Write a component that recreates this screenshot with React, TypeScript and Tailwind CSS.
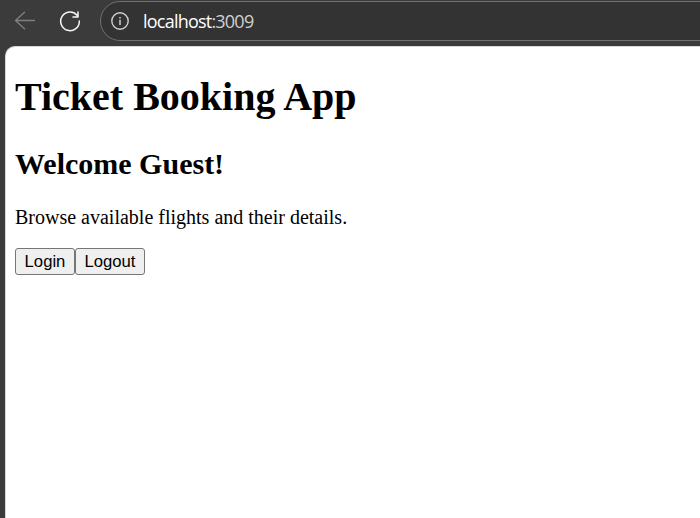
export default function App() {
  return (
    <div className="flex h-[518px] w-[700px] flex-col overflow-hidden bg-[#3b3b3b]">
      <header className="flex h-[46px] shrink-0 items-start">
        <div className="flex h-[41px] w-[100px] shrink-0 items-center gap-[24px] pl-[14px]">
          <svg className="size-[21px] shrink-0" viewBox="0 0 21 21" fill="none" stroke="#808080" strokeWidth="1.3" strokeLinecap="round" strokeLinejoin="round">
            <path d="M20.5 10.5H1.5M10.5 2.3L1.5 10.5L10.5 18.7" />
          </svg>
          <svg className="size-[22px] shrink-0" viewBox="0 0 22 22" fill="none" stroke="#f5f5f5" strokeWidth="1.5" strokeLinecap="round" strokeLinejoin="round">
            <path d="M20.3 11a9.3 9.3 0 1 1-2.3-5.8L19 6.5M19 2V7H14" />
          </svg>
        </div>
        <div className="mt-[1px] -mr-6 flex h-[40px] flex-1 items-center rounded-l-full border border-[#707070] bg-[#333333] pl-[10px]">
          <svg className="size-[18px] shrink-0" viewBox="0 0 18 18" fill="none" stroke="#d0d0d0" strokeWidth="1.4">
            <circle cx="9" cy="9" r="8.2" />
            <path d="M9 7.8V13M9 4.9V6.5" strokeWidth="1.5" />
          </svg>
          <span className="ml-[14px] font-['Open_Sans',sans-serif] text-[18px] leading-6 tracking-[-0.78px] text-white">localhost<span className="text-[#d0d0d0]">:3009</span></span>
        </div>
      </header>
      <main className="ml-[5px] flex-1 rounded-tl-[10px] border-t border-l border-[#d8d8d8] bg-white pl-[9px] pt-[27px] font-['Liberation_Serif',serif] text-black">
        <h1 className="text-[40px] leading-[46px] font-bold">Ticket Booking App</h1>
        <h2 className="mt-[26px] text-[30px] leading-[35px] font-bold">Welcome Guest!</h2>
        <p className="mt-[25px] text-[20px] leading-[23px]">Browse available flights and their details.</p>
        <div className="mt-[19px] flex font-['Liberation_Sans',sans-serif] text-[16.67px] leading-5">
          <button className="h-[27px] w-[60px] rounded-[3px] border border-[#767676] bg-[#efefef]">Login</button>
          <button className="h-[27px] w-[70px] rounded-[3px] border border-[#767676] bg-[#efefef]">Logout</button>
        </div>
      </main>
    </div>
  );
}
